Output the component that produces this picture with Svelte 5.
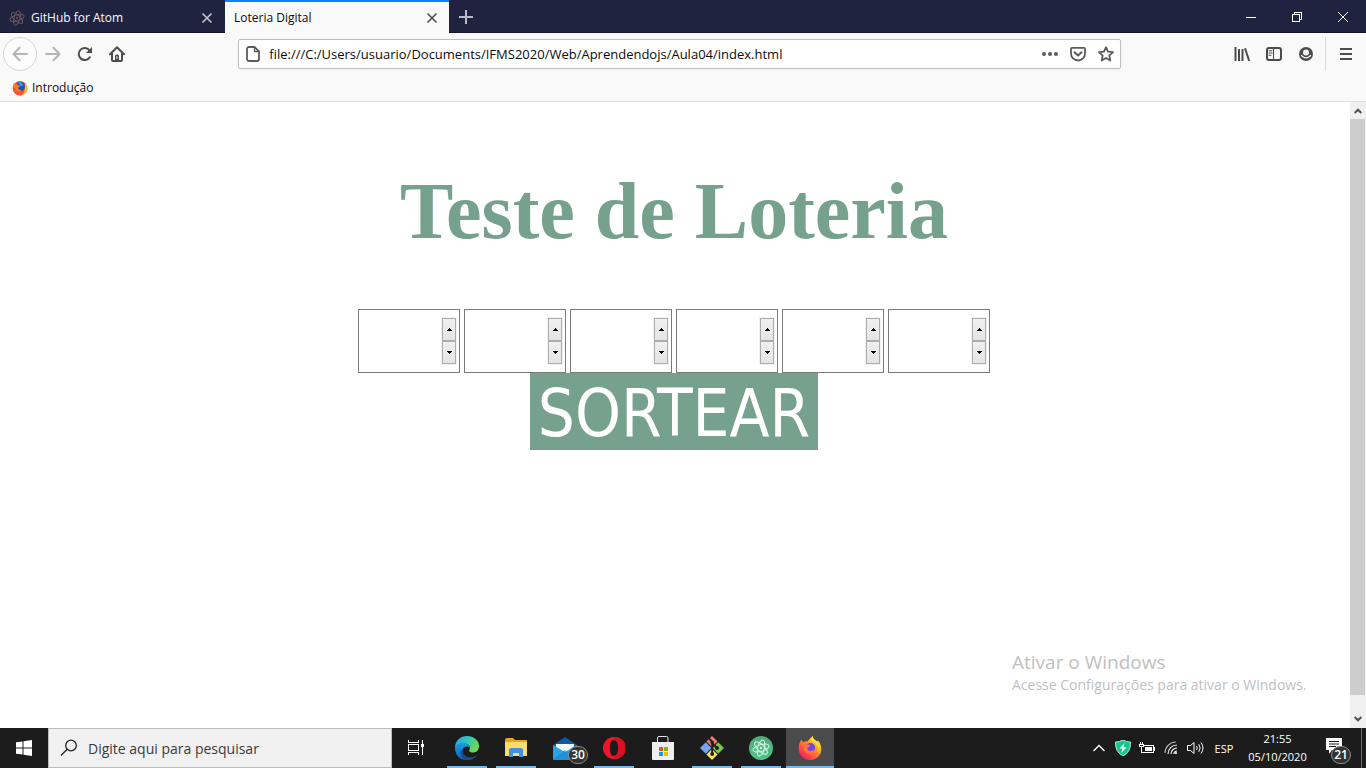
<script>
  let numbers = $state(['', '', '', '', '', '']);

  function draw() {
    const pool = Array.from({ length: 60 }, (_, i) => i + 1);
    numbers = numbers.map(() => pool.splice(Math.floor(Math.random() * pool.length), 1)[0]);
  }

  function step(i, by) {
    numbers[i] = Number(numbers[i] || 0) + by;
  }
</script>

{#snippet atom()}
  <g fill="none" stroke="currentColor">
    <ellipse cx="12" cy="12" rx="4.500" ry="11" transform="rotate(14 12 12)" />
    <ellipse cx="12" cy="12" rx="4.500" ry="11" transform="rotate(-46 12 12)" />
    <ellipse cx="12" cy="12" rx="4.500" ry="11" transform="rotate(74 12 12)" />
  </g>
  <circle cx="12" cy="12" r="1.6" fill="currentColor" />
{/snippet}

{#snippet cross()}
  <svg width="12" height="12" viewBox="0 0 12 12" fill="none" stroke="currentColor" stroke-width="1.6"><path d="M1.5 1.5l9 9M10.5 1.5l-9 9" /></svg>
{/snippet}

<div class="screen">
  <header>
    <div class="tabs">
      <div class="tab">
        <svg class="atom-dim" width="16" height="16" viewBox="0 0 24 24" stroke-width="1.5">{@render atom()}</svg>
        <span>GitHub for Atom</span>
        <button aria-label="Fechar aba GitHub for Atom">{@render cross()}</button>
      </div>
      <div class="tab active">
        <span>Loteria Digital</span>
        <button aria-label="Fechar aba Loteria Digital">{@render cross()}</button>
      </div>
      <button class="new" aria-label="Nova aba">
        <svg width="14" height="14" viewBox="0 0 14 14" stroke="#b9b9c6" stroke-width="2"><path d="M7 0v14M0 7h14" /></svg>
      </button>
      <div class="window">
        <button aria-label="Minimizar"><svg width="10" height="10" shape-rendering="crispEdges"><path d="M0 5.5h10" stroke="#fff" /></svg></button>
        <button aria-label="Restaurar"><svg width="10" height="10" fill="none" stroke="#fff" shape-rendering="crispEdges"><path d="M.5 2.500h7v7h-7zM2.500 2.500v-2h7v7h-2" /></svg></button>
        <button aria-label="Fechar"><svg width="10" height="10" stroke="#fff"><path d="M0 0l10 10M10 0L0 10" /></svg></button>
      </div>
    </div>

    <nav class="toolbar">
      <button class="back" aria-label="Voltar"><svg width="16" height="16" viewBox="0 0 16 16" class="line faded"><path d="M15 8H1.500M7.500 1.800L1.500 8l6 6.200" /></svg></button>
      <button class="tool" aria-label="Avançar"><svg width="16" height="16" viewBox="0 0 16 16" class="line faded"><path d="M1 8h13.500M8.500 1.800l6 6.200-6 6.200" /></svg></button>
      <button class="tool" aria-label="Recarregar"><svg width="16" height="16" viewBox="0 0 16 16" class="line"><path d="M12.800 11.200A6 6 0 1 1 12.600 4.500" /><path d="M15 1v6H9z" fill="#4c4c4f" stroke="none" /></svg></button>
      <button class="tool" aria-label="Página inicial"><svg width="16" height="16" viewBox="0 0 16 16" class="line"><path d="M1 8.200l7-7 7 7M3 7.500V14a1 1 0 0 0 1 1h8a1 1 0 0 0 1-1V7.500" /><path d="M6 14.500V10a1.500 1.500 0 0 1 1.500-1.500h1A1.500 1.500 0 0 1 10 10v4.500z" fill="#4c4c4f" stroke="none" /><path d="M8 10.500v2" stroke="#f9f9fa" stroke-width="1" /></svg></button>
      <div class="spacer"></div>
      <div class="url">
        <svg width="16" height="16" viewBox="0 0 16 16" class="line soft"><path d="M4 1h5.500L14 5.500V13a2 2 0 0 1-2 2H4a2 2 0 0 1-2-2V3a2 2 0 0 1 2-2z" /><path d="M9.500 1v4.500H14" stroke-width="1.300" /></svg>
        <input type="text" aria-label="Endereço" value="file:///C:/Users/usuario/Documents/IFMS2020/Web/Aprendendojs/Aula04/index.html" />
        <button aria-label="Ações da página"><svg width="16" height="16" fill="#5b5b5e"><circle cx="2" cy="8" r="2" /><circle cx="8" cy="8" r="2" /><circle cx="14" cy="8" r="2" /></svg></button>
        <button aria-label="Salvar no Pocket"><svg width="16" height="16" viewBox="0 0 16 16" class="line soft"><path d="M2 1.800h12a1 1 0 0 1 1 1v4.700a7 7 0 0 1-14 0V2.800a1 1 0 0 1 1-1z" /><path d="M4.500 6.300L8 9.600l3.500-3.300" stroke-width="2" /></svg></button>
        <button aria-label="Favoritar"><svg width="16" height="16" viewBox="0 0 16 16" class="line soft"><path d="M8 1.200l2 4.500 5 .5-3.700 3.400 1 5L8 12l-4.300 2.600 1-5L1 6.200l5-.5z" /></svg></button>
      </div>
      <div class="spacer"></div>
      <button class="tool" aria-label="Biblioteca"><svg width="16" height="16" viewBox="0 0 16 16" stroke="#4c4c4f" stroke-width="2"><path d="M1.500 1v14M5 3v12M8.500 3v12M11 2.300L15.200 15" /></svg></button>
      <button class="tool" aria-label="Painéis"><svg width="16" height="16" viewBox="0 0 16 16" class="line"><rect x="1" y="2" width="14" height="12" rx="2" /><path d="M7.500 2v12M3 4.800h3M3 7h3M3 9.200h2" stroke-width="1.100" /></svg></button>
      <button class="tool" aria-label="Conta"><svg width="16" height="16" viewBox="0 0 16 16"><circle cx="8" cy="8" r="7" fill="#4c4c4f" /><circle cx="8" cy="6.500" r="3" fill="#f9f9fa" /><path d="M3.300 9q.7 1.500 2 2 2.700 1.600 5.400 0 1.300-.5 2-2" fill="none" stroke="#f9f9fa" stroke-width="1.300" /></svg></button>
      <button class="tool menu" aria-label="Menu"><svg width="12" height="14" stroke="#4c4c4f" stroke-width="2"><path d="M0 2h12M0 7h12M0 12h12" /></svg></button>
    </nav>

    <div class="bookmarks">
      <a href="#intro">
        <svg width="16" height="16" viewBox="0 0 24 24"><circle cx="12" cy="12.500" r="11" fill="#ff4f35" /><path d="M20 4q5 7 2 13-3 6-10 6.500 7-3 7-9.500z" fill="#ffbd2e" /><circle cx="12.500" cy="10" r="7" fill="#1c54b8" /><path d="M9 3q5-1 8 4l-3 3-3-3z" fill="#27a6dc" /><path d="M2 5q2 1 4 1 3 0 3 2l3 1-3 3q1 4 6 3-3 4-8 1Q2 12 2 5z" fill="#ff7c1e" /></svg>
        Introdução
      </a>
    </div>
  </header>

  <div class="viewport">
    <main>
      <h1>Teste de Loteria</h1>
      <div class="numbers">
        {#each numbers as _, i}
          <div class="number">
            <input type="number" aria-label={`Número ${i + 1}`} bind:value={numbers[i]} />
            <div class="spin">
              <button aria-label="Aumentar" onclick={() => step(i, 1)}><svg width="5" height="3" shape-rendering="crispEdges"><path d="M2 0h1v1h1v1h1v1H0V2h1V1h1z" /></svg></button>
              <button aria-label="Diminuir" onclick={() => step(i, -1)}><svg width="5" height="3" shape-rendering="crispEdges"><path d="M0 0h5v1H4v1H3v1H2V2H1V1H0z" /></svg></button>
            </div>
          </div>
        {/each}
      </div>
      <button class="draw" onclick={draw}>SORTEAR</button>
    </main>
    <div class="scrollbar">
      <svg width="8" height="6" fill="none" stroke="#505050" stroke-width="2"><path d="M.7 5L4 1.700 7.300 5" /></svg>
      <div class="thumb"></div>
      <svg width="8" height="6" fill="none" stroke="#505050" stroke-width="2"><path d="M.7 1L4 4.300 7.300 1" /></svg>
    </div>
    <aside>
      <p class="big">Ativar o Windows</p>
      <p>Acesse Configurações para ativar o Windows.</p>
    </aside>
  </div>

  <footer>
    <button class="app" aria-label="Iniciar"><svg width="16" height="16" fill="#fff"><path d="M0 2.300l6.500-.9v6.100H0zM7.500 1.200L16 0v7.500H7.500zM0 8.500h6.500v6.100L0 13.700zM7.500 8.500H16V16l-8.500-1.200z" /></svg></button>
    <label class="search">
      <svg width="18" height="18" fill="none" stroke="#222" stroke-width="1.300"><circle cx="11" cy="6.500" r="5.300" /><path d="M7.200 10.300L1 16.500" /></svg>
      <input type="text" placeholder="Digite aqui para pesquisar" aria-label="Pesquisar" />
    </label>
    <button class="app" aria-label="Visão de tarefas"><svg width="16" height="16" fill="none" stroke="#fff" shape-rendering="crispEdges"><path d="M.5 0v2.500h10V0M.5 4.500h10v6H.5zM.5 15v-2.500h10V15M14.500 0v15" /><path d="M13 4h3v3h-3z" fill="#fff" stroke="none" /></svg></button>

    <div class="apps">
      <button class="app open" aria-label="Edge">
        <svg width="24" height="24" viewBox="0 0 24 24">
          <defs>
            <linearGradient id="eg" x1="0" y1="0" x2="1" y2=".5"><stop offset="0" stop-color="#21a9e1" /><stop offset=".5" stop-color="#2ec5c0" /><stop offset="1" stop-color="#6ddb4f" /></linearGradient>
            <linearGradient id="eb" x1="0" y1="0" x2="0" y2="1"><stop offset="0" stop-color="#1b9de2" /><stop offset="1" stop-color="#1160b8" /></linearGradient>
          </defs>
          <path d="M0 12C0 4.500 5.500 0 12 0c7 0 12 4.500 12 10 0 4.500-3 6.500-6 6.500-3.500 0-4.500-1.500-3.500-3 1.500-4-2-6-5-6C5 7.500 1 9 0 12z" fill="url(#eg)" />
          <path d="M0 12c.5-3 4-5.500 8-5.500 4.500 0 6.500 3 6.500 5-1-2-6.500-1.500-7 3-.5 4 4 8 9 7.500C14 23.500 12.500 24 11 24 4.500 24 0 18.500 0 12z" fill="url(#eb)" />
          <path d="M10 11c-4 2-3 8 2 9.700 4 1.300 8 .3 10.500-2.700-2 5-7.500 7-11.500 5.800C4 21.500 4 13 10 11z" fill="#124c96" />
        </svg>
      </button>
      <button class="app open" aria-label="Explorador de Arquivos"><svg width="22" height="20"><path d="M0 2q0-2 2-2h6l2 2h12v16H0z" fill="#e8a71b" /><path d="M0 4h22v13q0 1-1 1H1q-1 0-1-1z" fill="#ffda6c" /><path d="M4 19v-7q0-2 2-2h10q2 0 2 2v7h-4v-4H8v4z" fill="#3e91df" /></svg></button>
      <button class="app mail" aria-label="Email"><svg width="24" height="23"><path d="M0 8l12-8 12 8v2L12 17 0 10z" fill="#0b59a8" /><path d="M3 7h18v7l-9 4-9-4z" fill="#f4f8fc" /><path d="M0 8l12 7 12-7v14q0 1-1 1H1q-1 0-1-1z" fill="#2aa4e8" /><path d="M0 22l12-9 12 9-1 1H1z" fill="#1785d0" opacity=".6" /></svg><span class="badge">30</span></button>
      <button class="app open" aria-label="Opera"><svg width="22" height="22"><path fill-rule="evenodd" d="M11 0a11 11 0 1 0 0 22 11 11 0 0 0 0-22zm0 3c2.800 0 4.200 3.500 4.200 8S13.800 19 11 19s-4.200-3.500-4.200-8S8.200 3 11 3z" fill="#f01527" /><path d="M12 0a11 11 0 0 1 0 22l-1-3c2.800 0 4.200-3.500 4.200-8S13.800 3 11 3z" fill="#d91022" /></svg></button>
      <button class="app" aria-label="Microsoft Store"><svg width="24" height="24"><path d="M6.500 6V2q0-1.500 1.500-1.500h7.500Q17 .5 17 2v4" fill="none" stroke="#e8e8e8" /><path d="M1 6h22v17q0 1-1 1H2q-1 0-1-1z" fill="#eee" /><path d="M8 11h4v4H8z" fill="#f25022" /><path d="M13 11h4v4h-4z" fill="#7fba00" /><path d="M8 16h4v4H8z" fill="#00a4ef" /><path d="M13 16h4v4h-4z" fill="#ffb900" /></svg></button>
      <button class="app open" aria-label="Git">
        <svg width="24" height="24"><path d="M12 0l5.500 5.500L12 11 6.500 5.500z" fill="#f27878" /><path d="M5.800 6.200L11.500 12l-5.700 5.800L0 12z" fill="#73a6ed" /><path d="M18.200 6.200L24 12l-5.800 5.800-5.700-5.800z" fill="#7cc64b" /><path d="M12 13l5.500 5.500L12 24l-5.500-5.500z" fill="#ffe173" /><path d="M9 2.500l3.200 3.200V18M12.200 7l5 5.500" fill="none" stroke="#222" stroke-width="2" /><circle cx="12.200" cy="6.500" r="1.800" fill="#222" /><circle cx="17" cy="12" r="2" fill="#222" /><circle cx="12.200" cy="18" r="2" fill="#222" /></svg>
      </button>
      <button class="app open" aria-label="Atom"><svg width="24" height="24" viewBox="0 0 24 24"><defs><linearGradient id="at" x1="0" y1="0" x2="0" y2="1"><stop offset="0" stop-color="#4faa78" /><stop offset="1" stop-color="#4fc48a" /></linearGradient></defs><circle cx="12" cy="12" r="12" fill="url(#at)" /><g transform="translate(3 3) scale(.75)" color="#d9f5e5" stroke-width="1.400">{@render atom()}</g></svg></button>
      <button class="app open current" aria-label="Firefox">
        <svg width="24" height="24" viewBox="0 0 24 24">
          <defs><linearGradient id="ff" x1="1" y1="0" x2=".2" y2="1"><stop offset="0" stop-color="#fff24a" /><stop offset=".35" stop-color="#ffb62b" /><stop offset=".65" stop-color="#ff6236" /><stop offset="1" stop-color="#f5156c" /></linearGradient></defs>
          <path d="M3.500 3.500q.5 2 2 2.500 2-1 4-.5Q12 2 14.500 0q.5 3 4.500 5.500l1-1q3.500 4 3.300 9A11.300 10.500 0 0 1 12 24 11.300 11 0 0 1 .7 13Q.500 7 3.500 3.500z" fill="url(#ff)" />
          <path d="M14.500 0q.5 3 4.500 5.500 4 5 .5 11 3-8-5-10.500Q12.500 3 14.500 0z" fill="#ffdf3b" />
          <circle cx="12.200" cy="12" r="5" fill="#7542e5" />
          <path d="M5 8q2.500-1 4.500.5l3 .5q-.5 2-3 2.500-.5 3 2.500 3.500 3 0 5-2-1 5-6 5Q5 17.500 5 8z" fill="#ff7139" />
        </svg>
      </button>
    </div>

    <div class="tray">
      <button aria-label="Mostrar ícones ocultos"><svg width="12" height="8" fill="none" stroke="#fff" stroke-width="1.300"><path d="M.5 7L6 1.500 11.500 7" /></svg></button>
      <button aria-label="Segurança"><svg width="16" height="16"><path d="M8 0q3.500 2 7.500 2 .5 10-7.500 14Q0 12 .5 2 4.500 2 8 0z" fill="#10ca8b" stroke="#e7fff6" stroke-width=".8" /><path d="M9.500 3L4.500 8.500h3L6.500 13l5-5.700H8.500z" fill="#fff" /></svg></button>
      <button aria-label="Bateria"><svg width="16" height="12" fill="none" stroke="#fff" shape-rendering="crispEdges"><path d="M4.500 3.500h10v7h-9M15.500 5v4M1.500 0v2M3.500 0v2M.5 2.500h4v2h-4zM2.500 5v5.500h3" /><path d="M6 5h7v4H6z" fill="#fff" stroke="none" /></svg></button>
      <button aria-label="Rede sem fio"><svg width="14" height="14" fill="none" stroke="#aaa" stroke-width="1.200"><path d="M1 12A11 11 0 0 1 12 1" /><path d="M4 13a9 9 0 0 1 9-9M7 13a6 6 0 0 1 6-6M10 13a3 3 0 0 1 3-3" stroke="#eee" /><circle cx="12" cy="12" r="1" fill="#fff" stroke="none" /></svg></button>
      <button aria-label="Volume"><svg width="17" height="14" fill="none" stroke="#fff"><path d="M.5 4.500h3l3.500-3v11l-3.500-3h-3zM9.500 5q1.500 2 0 4M11.700 3.200q3 3.800 0 7.600M14 1.500q4 5.500 0 11" /></svg></button>
      <button class="lang">ESP</button>
      <button class="clock"><span>21:55</span><span>05/10/2020</span></button>
      <button class="notes" aria-label="Notificações, 21"><svg width="16" height="16" fill="#fff"><path d="M0 0h16v12H6l-3 4v-4H0z" /><path d="M3 3.500h10M3 6h10M3 8.500h7" stroke="#1c1c1c" /></svg><span class="badge">21</span></button>
      <button class="desktop" aria-label="Mostrar área de trabalho"></button>
    </div>
  </footer>
</div>

<style>
  :global(body) { margin: 0; }
  * { box-sizing: border-box; }
  button, input { margin: 0; padding: 0; border: 0; background: none; color: inherit; font: inherit; border-radius: 0; }
  input { min-width: 0; outline: 0; }
  button { display: flex; align-items: center; justify-content: center; flex-shrink: 0; }
  svg { flex-shrink: 0; display: block; }
  .screen { min-height: 100vh; display: flex; flex-direction: column; font: 12px "Open Sans", "Noto Sans", sans-serif; color: #0c0c0d; background: #fff; }

  header { background: #f9f9fa; border-bottom: 1px solid #e0e0e1; }
  .tabs { display: flex; height: 33px; background: #202340; color: #f9f9fa; box-shadow: inset 0 -1px #14162b; }
  .tab { display: flex; align-items: center; gap: 6px; width: 225px; padding: 2px 12px 0 9px; }
  .tab span { flex: 1; white-space: nowrap; }
  .tab button { color: #c5c5cf; }
  .tab.active { width: 224px; background: #f9f9fa; color: #0c0c0d; border-top: 2px solid #0a84ff; padding-top: 0; padding-right: 11px; }
  .tab.active button { color: #4c4c4f; }
  .atom-dim { color: #66595d; }
  .new { width: 34px; }
  .window { display: flex; margin-left: auto; }
  .window button { width: 46px; }

  .toolbar { display: flex; align-items: center; height: 41px; padding-left: 3px; }
  .line { fill: none; stroke: #4c4c4f; stroke-width: 2; stroke-linejoin: round; stroke-linecap: round; }
  .soft { stroke: #5b5b5e; stroke-width: 1.8px; }
  .faded { stroke: #b4b4b5; }
  .back { width: 34px; height: 34px; border: 1px solid #d4d4d5; border-radius: 50%; background: #fcfcfc; }
  .tool { width: 32px; height: 34px; }
  .menu { width: 41px; border-left: 1px solid #d9d9da; margin-left: 3px; }
  .spacer { flex: 13; }
  .url { flex: 108; display: flex; align-items: center; height: 30px; border: 1px solid #bebebe; border-radius: 2px; background: #fff; box-shadow: 0 1px 3px #0000000d; padding: 0 0 0 6px; }
  .url input { flex: 1; font-size: 13px; padding-left: 8px; }
  .url button { width: 28px; height: 28px; }
  .bookmarks { display: flex; height: 27px; padding: 0 12px; }
  .bookmarks a { display: flex; align-items: center; gap: 4px; color: inherit; text-decoration: none; }

  .viewport { position: relative; flex: 1; display: flex; }
  main { flex: 1; display: flex; flex-direction: column; align-items: center; padding: 63px 10px 8px 8px; }
  h1 { margin: 0 0 52px; font: bold 80px/92px "Liberation Serif", serif; color: #76a28d; }
  .numbers { display: flex; gap: 4px; }
  .number { display: flex; align-items: center; width: 102px; height: 64px; padding: 0 3px 0 4px; border: 1px solid #7a7a7a; }
  .number input { flex: 1; height: 60px; font-size: 48px; appearance: textfield; }
  .number input::-webkit-inner-spin-button { appearance: none; }
  .spin { box-shadow: 0 0 0 1px #f2f2f2; }
  .spin button { width: 14px; height: 23px; border: 1px solid #adadad; background: linear-gradient(#f0f0f0, #e5e5e5); }
  .draw { padding: 4px 8px 0; height: 77px; background: #76a28d; color: #fff; font: 65px "DejaVu Sans Condensed", "Noto Sans", sans-serif; }
  .scrollbar { width: 16px; display: flex; flex-direction: column; align-items: center; gap: 5px; padding: 6px 1px 6px 0; background: #f0f0f0; }
  .thumb { flex: 1; width: 15px; margin-bottom: 16px; background: #cdcdcd; }
  aside { position: absolute; right: 54px; bottom: 32px; color: #bfbfbf; font-size: 14px; line-height: 22px; width: 300px; white-space: nowrap; }
  aside p { margin: 0; }
  aside .big { font-size: 19px; line-height: 24px; }

  footer { display: flex; height: 40px; background: #1c1c1c; color: #fff; }
  .app { position: relative; width: 48px; height: 40px; }
  .search { display: flex; align-items: center; gap: 10px; width: 344px; padding: 0 12px 0 11px; background: #f1f1f1; border: 1px solid #bdbdbd; }
  .search input { flex: 1; font-size: 14px; color: #333; }
  .search input::placeholder { color: #3a3a3a; opacity: 1; }
  .apps { display: flex; gap: 1px; margin-left: 3px; }
  .open::after { content: ""; position: absolute; bottom: 0; left: 4px; right: 4px; height: 2px; background: #76b9ed; }
  .current { background: #4b4b4b; }
  .current::after { left: 0; right: 0; }
  .badge { position: absolute; right: 1px; bottom: 4px; min-width: 20px; height: 18px; border: 1px solid #8a8a8a; border-radius: 9px; background: #333; color: #fff; font-size: 12px; line-height: 16px; font-weight: 600; text-align: center; }
  .tray { display: flex; margin-left: auto; font-size: 11px; }
  .tray button { position: relative; width: 24px; }
  .tray .lang { width: 34px; }
  .tray .clock { width: 73px; flex-direction: column; line-height: 18px; }
  .tray .notes { width: 47px; padding: 0 8px 4px 0; }
  .tray .notes .badge { right: 10px; bottom: 4px; }
  .tray .desktop { width: 5px; border-left: 1px solid #6a6a6a; }
</style>
